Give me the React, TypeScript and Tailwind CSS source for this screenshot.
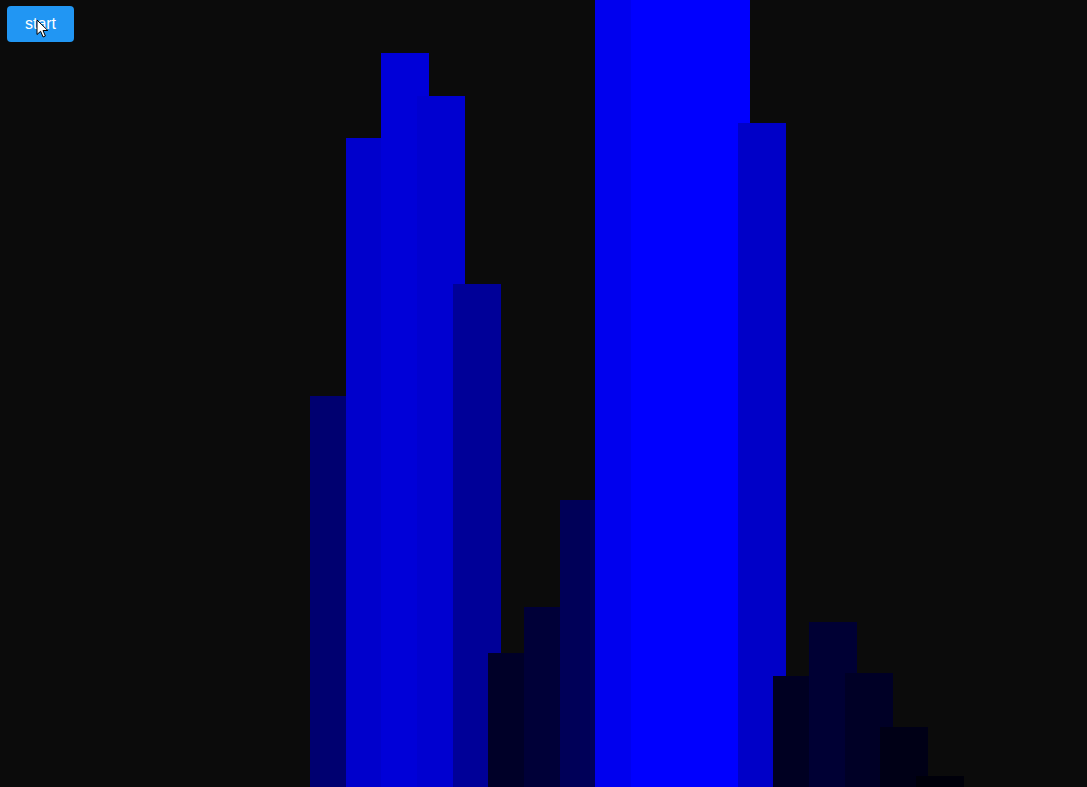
import React from "react";

type Bar = { h: number; c: string };

// Frequency bars, left to right; later bars are painted over earlier ones.
const bars: Bar[] = [
  { h: 391, c: "#000070" },
  { h: 649, c: "#0000cc" },
  { h: 734, c: "#0000d8" },
  { h: 691, c: "#0000d0" },
  { h: 503, c: "#000098" },
  { h: 134, c: "#000028" },
  { h: 180, c: "#000038" },
  { h: 287, c: "#000058" },
  { h: 800, c: "#0000ee" },
  { h: 800, c: "#0000ff" },
  { h: 800, c: "#0000ff" },
  { h: 800, c: "#0000ff" },
  { h: 664, c: "#0000c8" },
  { h: 111, c: "#000022" },
  { h: 165, c: "#000034" },
  { h: 114, c: "#000026" },
  { h: 60, c: "#000016" },
  { h: 11, c: "#00000a" },
];

const W = 1087;
const H = 787;
const X0 = 310;
const STEP = 35.65;
const BAR_W = 48;

function Spectrum() {
  return (
    <svg
      width={W}
      height={H}
      viewBox={`0 0 ${W} ${H}`}
      className="block"
      shapeRendering="crispEdges"
    >
      <rect x={0} y={0} width={W} height={H} fill="#0b0b0b" />
      {bars.map((b, i) => (
        <rect
          key={i}
          x={Math.round(X0 + i * STEP)}
          y={H - b.h}
          width={BAR_W}
          height={b.h}
          fill={b.c}
        />
      ))}
    </svg>
  );
}

function Pointer() {
  return (
    <svg
      width="14"
      height="20"
      viewBox="0 0 14 20"
      className="absolute left-[36px] top-[19px] pointer-events-none"
    >
      <path
        d="M1 1 L1 15.5 L4.6 12.3 L7.1 18 L9.4 17 L7 11.5 L11.8 11.5 Z"
        fill="#ffffff"
        stroke="#000000"
        strokeWidth="1"
        strokeLinejoin="round"
      />
    </svg>
  );
}

export default function App() {
  return (
    <div className="relative w-[1087px] h-[787px] overflow-hidden bg-[#0b0b0b]">
      <Spectrum />
      <button
        className="absolute left-[7px] top-[6px] w-[67px] h-[36px] rounded-[4px] bg-[#2196f3] text-white text-[16px] leading-none flex items-center justify-center"
        style={{ fontFamily: '"Liberation Sans", Arial, sans-serif' }}
      >
        start
      </button>
      <Pointer />
    </div>
  );
}
